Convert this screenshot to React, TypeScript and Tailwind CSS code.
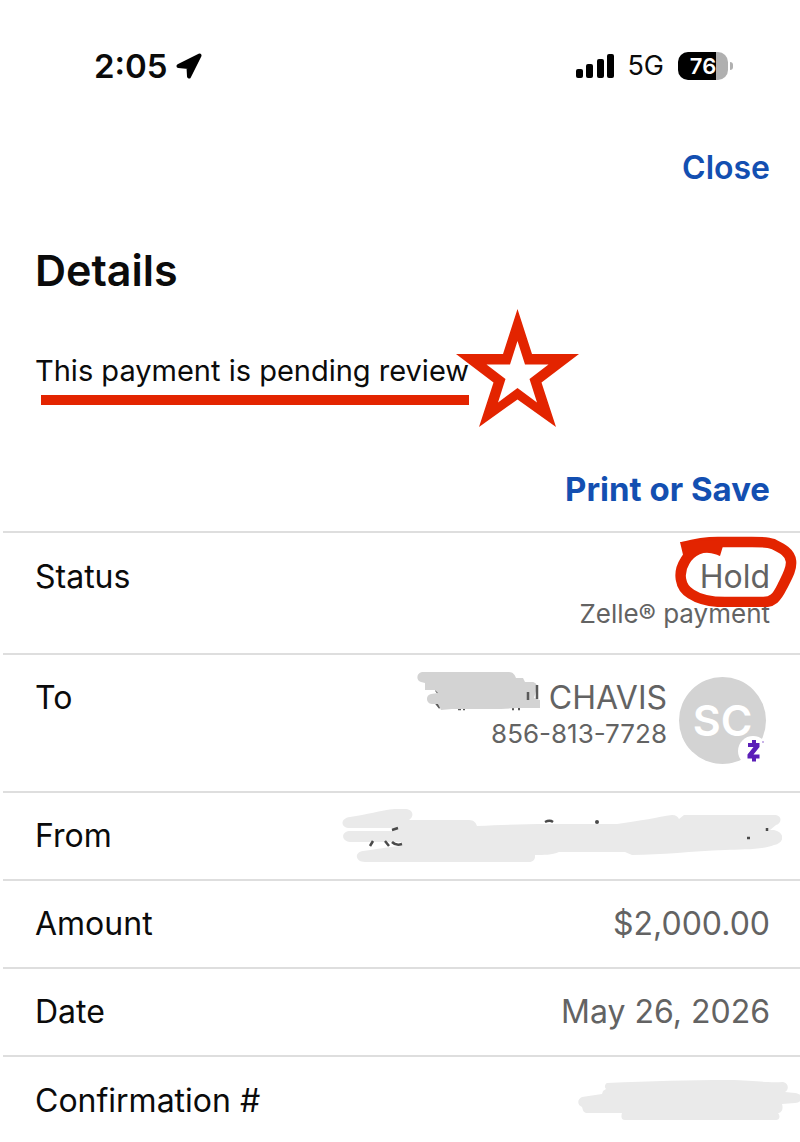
import type { ReactNode } from 'react';
import { clsx } from 'clsx';

function StatusBar() {
  return (
    <div className="flex h-11 items-center justify-between pr-[67px] pl-[94px]">
      <div className="flex items-center gap-2">
        <span className="text-[33px] leading-10 font-semibold">2:05</span>
        <svg viewBox="0 0 27 27" className="size-[27px]" aria-hidden="true">
          <path
            d="M2.500 13 23.500 2.500 13 23.500 12.500 14Z"
            stroke="#000"
            strokeWidth="4"
            strokeLinejoin="round"
          />
        </svg>
      </div>
      <div className="flex items-center">
        <svg viewBox="0 0 40 26" className="h-[26px] w-10" aria-label="Signal">
          <rect x="1" y="16" width="7" height="9" rx="2" />
          <rect x="11" y="11" width="7" height="14" rx="2" />
          <rect x="22" y="6" width="7" height="19" rx="2" />
          <rect x="32" y="1" width="7" height="24" rx="2" />
        </svg>
        <span className="ml-3 text-[27px] leading-10">5G</span>
        <div className="ml-3.5 flex items-center gap-0.5">
          <div className="flex h-7 w-[50px] items-center justify-center rounded-[10px] bg-linear-to-r from-black from-76% to-[#b0b0b0] to-76% text-[22px] leading-7 font-semibold text-white">
            76
          </div>
          <div className="h-2 w-[3px] rounded-r-full bg-[#b0b0b0]" />
        </div>
      </div>
    </div>
  );
}

function Star() {
  return (
    <svg viewBox="0 0 124 120" className="absolute -top-[42px] left-full -ml-[13px] h-[120px] w-[124px]" aria-hidden="true">
      <path
        fill="#e32400"
        fillRule="evenodd"
        d="M61.500 0 76 45H123L85.500 73.500 100 118 61.500 90.500 23 118 37.500 73.500 0 45H47ZM61.500 32 54 55.500H30.500L49.500 70 42 93.500 61.500 79 81 93.500 73.500 70 92.500 55.500H69Z"
      />
    </svg>
  );
}

function HoldCircle() {
  return (
    <svg viewBox="0 0 124 72" className="absolute -top-[22px] -right-7 h-[72px] w-[124px]" aria-hidden="true">
      <path
        d="M43 11C29 11 17 15 11 26 4 37 5 52 17 59 26 65 37 67 51 67H87C99 68 103 62 108 52 113 42 118 34 117 26 116 17 107 13 99 9 91 6 80 7 65 7H44C31 7 20 9 9 12"
        fill="none"
        stroke="#e32400"
        strokeWidth="10.500"
      />
      <path d="M6 7 10 24 26 18C34 17 42 19 46 21L49 11 43 5Z" fill="#e32400" />
    </svg>
  );
}

function NameScribble() {
  return (
    <svg viewBox="0 0 124 40" className="h-10 w-[124px]" aria-label="Hidden first name">
      <g fill="none" stroke="#5a5a5a" strokeWidth="2.500">
        <path d="M19 18l3 4M19 31l4 5M41 37h3M46 37h2M95 37h2M101 37h2" />
      </g>
      <path
        d="M5 0H92C96 0 98 3 99 6H106L108 10H115C120 10 121 15 119 19L117 26 123 28V36H100L84 37H35L24 38 21 32H15C9 32 8 23 14 22L21 21 18 18H8V11L4 10C-1 9-1 1 5 0Z"
        fill="#d3d3d3"
      />
      <path d="M111 20v8M120 13v14" stroke="#5a5a5a" strokeWidth="2.500" />
    </svg>
  );
}

function AccountScribble() {
  return (
    <svg viewBox="0 0 440 56" className="h-14 w-[440px]" aria-label="Hidden account">
      <path
        d="M8 9C25 7 38 2 53 1H64C72 2 72 9 67 12H127C132 12 134 15 135 18 160 17 180 16 207 16H275C299 13 316 9 330 7 334 7 336 9 337 11L342 7H434C440 8 440 15 434 17L428 22H432C443 24 443 35 432 37 420 42 400 41 383 42 350 43 320 47 290 47L283 44H217C210 47 202 47 193 47V49C193 52 190 54 187 54H23C13 54 12 44 21 43 37 41 44 39 59 38V34H8C-1 33-1 24 7 23H53L50 20 8 20C-2 20-2 10 8 9Z"
        fill="#eaeaea"
      />
      <path
        d="M31 33l-3 5M43 33l4 5M50 34c3 3 7 3 10 2M50 22l6-2M203 14c3-1.500 6-1.500 8 0M405 30h3M425 20v3"
        fill="none"
        stroke="#4a4a4a"
        strokeWidth="2.500"
      />
      <circle cx="255" cy="14" r="2" fill="#4a4a4a" />
    </svg>
  );
}

function NumberScribble() {
  return (
    <svg viewBox="0 0 224 42" className="h-[42px] w-56" aria-label="Hidden confirmation number">
      <path
        d="M29 3C75 1 110 0 150 0 176 0 184 3 205 2 211 3 211 10 207 12L217 13C226 14 226 22 217 23L204 24C206 31 202 33 200 33 203 37 201 40 198 40H47C43 40 43 36 44 33H8C5 32 5 30 4 27-1 25-1 19 4 17L24 14 25 11 28 9C26 7 27 4 29 3Z"
        fill="#eaeaea"
      />
    </svg>
  );
}

function Avatar() {
  return (
    <div className="relative -mt-px flex size-[87px] shrink-0 items-center justify-center rounded-full bg-[#d3d3d3] text-[43px] leading-none font-semibold text-white">
      SC
      <svg viewBox="0 0 30 30" className="absolute -right-0.5 -bottom-0.5 size-[30px]" aria-label="Zelle">
        <circle cx="15" cy="15" r="15" fill="#fff" />
        <path
          d="M10 7H14V4H18V7H21.500V11L15.500 18.500H21.500V22.500H18V25.500H14V22.500H9.500V18.500L15.500 11H10Z"
          fill="#5b1fb8"
        />
        <circle cx="25" cy="6" r="1" fill="#b99ce0" />
      </svg>
    </div>
  );
}

function Row({ label, className, children }: { label: string; className?: string; children: ReactNode }) {
  return (
    <div className={clsx('ml-[3px] flex justify-between border-t-2 border-[#dedede] pr-[30px] pl-8', className)}>
      <dt className="shrink-0 text-[32px] leading-10">{label}</dt>
      <dd className="flex justify-end text-right text-[32px] leading-10 text-[#636363]">{children}</dd>
    </div>
  );
}

export default function App() {
  return (
    <main className="overflow-hidden bg-white pt-11 font-['Inter',sans-serif] text-[#0b0b0b]">
      <StatusBar />

      <div className="mt-[58px] flex justify-end pr-[30px]">
        <button type="button" className="text-[32px] leading-11 font-semibold text-[#134fb1]">
          Close
        </button>
      </div>

      <section className="px-[35px] pt-[52px]">
        <h1 className="text-[43px] leading-14 font-semibold">Details</h1>
        <p className="relative mt-[53px] w-fit text-[29px] leading-10">
          This payment is pending review
          <span className="absolute top-11 right-0 left-1.5 h-2.5 bg-[#e32400]" />
          <Star />
        </p>
      </section>

      <div className="mt-[76px] mb-5 flex justify-end pr-[30px]">
        <button type="button" className="text-[33px] leading-11 font-bold text-[#134fb1]">
          Print or Save
        </button>
      </div>

      <dl>
        <Row label="Status" className="pt-6 pb-[22px]">
          <div>
            <div className="relative">
              Hold
              <HoldCircle />
            </div>
            <div className="text-[26px] leading-[34px]">Zelle® payment</div>
          </div>
        </Row>
        <Row label="To" className="pt-[23px] pb-[27px]">
          <div className="mr-1 flex gap-3">
            <div>
              <div className="flex gap-2">
                <div className="-mt-1.5 h-10">
                  <NameScribble />
                </div>
                CHAVIS
              </div>
              <div className="text-[26px] leading-8">856-813-7728</div>
            </div>
            <Avatar />
          </div>
        </Row>
        <Row label="From" className="items-center py-[23px]">
          <div className="-my-2 -mr-3">
            <AccountScribble />
          </div>
        </Row>
        <Row label="Amount" className="py-[23px]">$2,000.00</Row>
        <Row label="Date" className="py-[23px]">May 26, 2026</Row>
        <Row label="Confirmation #" className="items-center py-[23px]">
          <div className="-mr-8">
            <NumberScribble />
          </div>
        </Row>
      </dl>
    </main>
  );
}
